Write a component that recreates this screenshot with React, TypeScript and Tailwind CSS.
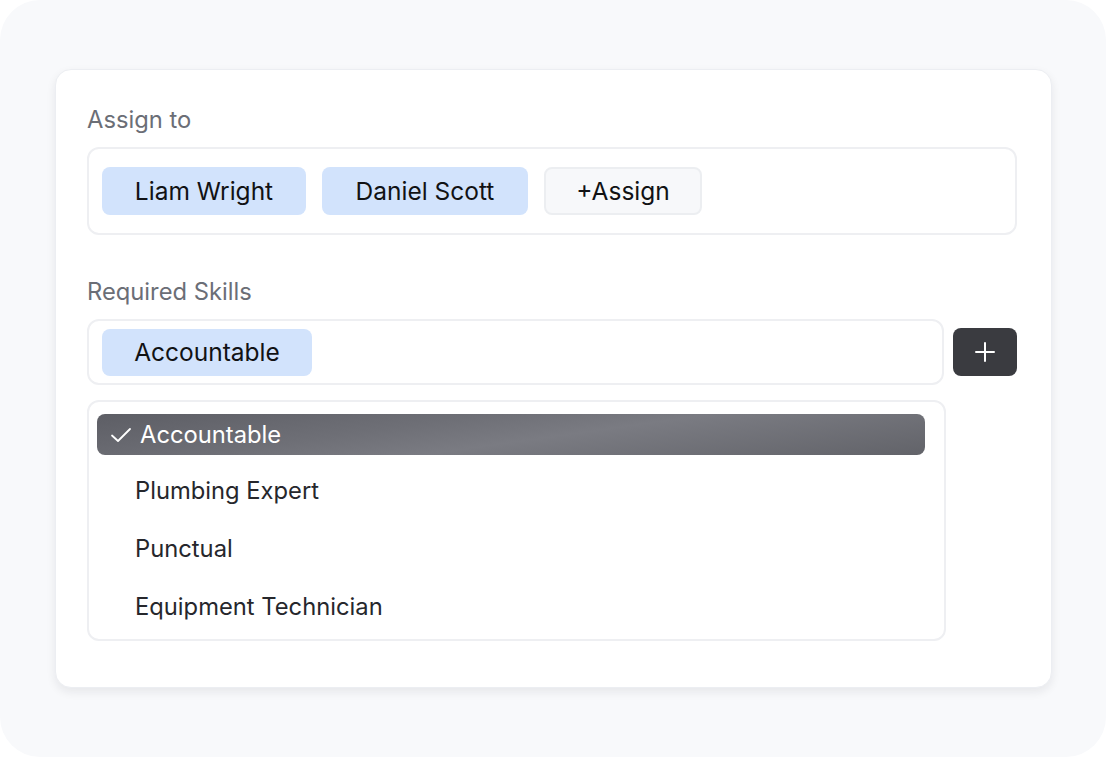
import React from "react";

function Check() {
  return (
    <svg width="22" height="16" viewBox="0 0 22 16" fill="none" className="shrink-0">
      <path d="M2 8.5 L8 14 L20 2" stroke="white" strokeWidth="1.8" strokeLinecap="round" strokeLinejoin="round" />
    </svg>
  );
}

function Plus() {
  return (
    <svg width="22" height="22" viewBox="0 0 22 22" fill="none">
      <path d="M11 2 V20 M2 11 H20" stroke="white" strokeWidth="2" strokeLinecap="round" />
    </svg>
  );
}

export default function App() {
  return (
    <div className="w-[1106px] h-[757px] bg-white" style={{ fontFamily: "Inter, 'Noto Sans', sans-serif" }}>
      <div className="w-full h-full rounded-[40px] bg-[#f8f9fb] pt-[69px] pl-[55px]">
        <div className="w-[997px] h-[619px] bg-white rounded-[16px] border border-[#eceef2] shadow-[0_4px_10px_rgba(20,25,40,0.08)] pt-[35px] pl-[31px] pr-[34px]">
          <div className="text-[23.75px] leading-[30px] text-[#6b6e76]">Assign to</div>
          <div className="mt-[12px] h-[88px] rounded-[12px] border-2 border-[#eeeff2] flex items-center gap-[16px] pl-[13px]">
            <div className="h-[48px] w-[204px] rounded-[8px] bg-[#d2e3fc] flex items-center justify-center text-[24.5px] text-[#111214]">Liam Wright</div>
            <div className="h-[48px] w-[206px] rounded-[8px] bg-[#d2e3fc] flex items-center justify-center text-[24.5px] text-[#111214]">Daniel Scott</div>
            <div className="h-[48px] w-[158px] rounded-[8px] bg-[#f7f8fa] border-2 border-[#eceef1] flex items-center justify-center text-[24.5px] text-[#111214]">+Assign</div>
          </div>
          <div className="mt-[42px] text-[23.75px] leading-[30px] text-[#6b6e76]">Required Skills</div>
          <div className="mt-[12px] flex items-center gap-[9px]">
            <div className="h-[66px] w-[858px] rounded-[12px] border-2 border-[#eeeff2] flex items-center pl-[13px]">
              <div className="h-[47px] w-[210px] rounded-[8px] bg-[#d2e3fc] flex items-center justify-center text-[24.5px] text-[#111214]">Accountable</div>
            </div>
            <button className="h-[48px] w-[64px] rounded-[8px] bg-[#3a3b40] flex items-center justify-center">
              <Plus />
            </button>
          </div>
          <div className="mt-[15px] h-[241px] w-[859px] rounded-[12px] border-2 border-[#eeeff2] pt-[12px] pl-[8px] pr-[19px]">
            <div className="h-[41px] rounded-[8px] bg-[linear-gradient(172deg,#5d5e65_0%,#6e6f76_35%,#7a7b82_55%,#626369_100%)] flex items-center pl-[13px] gap-[8px] text-[23.75px] text-white">
              <Check />
              <span>Accountable</span>
            </div>
            <div className="mt-[7px] h-[58px] flex items-center pl-[38px] text-[23.75px] text-[#26272c]">Plumbing Expert</div>
            <div className="h-[58px] flex items-center pl-[38px] text-[23.75px] text-[#26272c]">Punctual</div>
            <div className="h-[58px] flex items-center pl-[38px] text-[23.75px] text-[#26272c]">Equipment Technician</div>
          </div>
        </div>
      </div>
    </div>
  );
}
